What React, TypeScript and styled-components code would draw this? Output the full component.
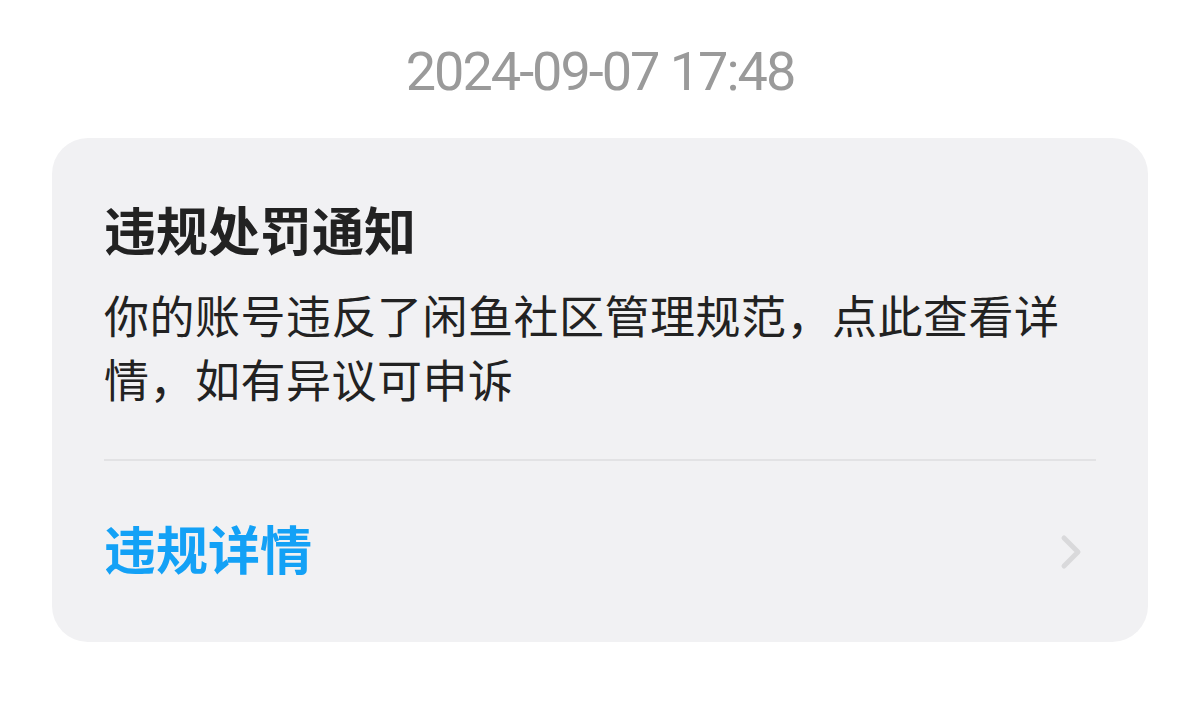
import styled, { createGlobalStyle } from "styled-components";

const GlobalStyle = createGlobalStyle`
  body {
    margin: 0;
    background: #ffffff;
    font-family: "Noto Sans CJK SC", "Noto Sans", sans-serif;
  }
`;

export default function App() {
  return (
    <>
      <GlobalStyle />
      <Page>
        <TimeStamp>2024-09-07 17:48</TimeStamp>
        <Card>
          <Title>违规处罚通知</Title>
          <Body>你的账号违反了闲鱼社区管理规范，点此查看详情，如有异议可申诉</Body>
          <Divider />
          <LinkRow>
            <LinkText>违规详情</LinkText>
            <Chevron viewBox="0 0 24 36" aria-hidden>
              <path
                d="M4 4 L18 18 L4 32"
                fill="none"
                stroke="#d9d9db"
                strokeWidth="5"
                strokeLinecap="round"
                strokeLinejoin="round"
              />
            </Chevron>
          </LinkRow>
        </Card>
      </Page>
    </>
  );
}

const Page = styled.div`
  display: flex;
  flex-direction: column;
  align-items: center;
  padding: 32px 52px 0;
`;

const TimeStamp = styled.div`
  font-family: Roboto, "Noto Sans", sans-serif;
  font-size: 54px;
  line-height: 80px;
  letter-spacing: -2px;
  color: #9a9a9a;
  margin-bottom: 26px;
`;

const Card = styled.div`
  box-sizing: border-box;
  width: 100%;
  height: 504px;
  display: flex;
  flex-direction: column;
  background: #f1f1f3;
  border-radius: 36px;
  padding: 60px 52px 0;
`;

const Title = styled.div`
  font-size: 52px;
  line-height: 62px;
  font-weight: 700;
  color: #222222;
`;

const Body = styled.div`
  margin-top: 23px;
  font-size: 45px;
  line-height: 64px;
  letter-spacing: 0.5px;
  color: #222222;
`;

const Divider = styled.div`
  margin-top: 48px;
  height: 2px;
  background: #e2e2e4;
`;

const LinkRow = styled.div`
  flex: 1;
  display: flex;
  align-items: center;
  justify-content: space-between;
  padding-right: 12px;
`;

const LinkText = styled.span`
  font-size: 52px;
  line-height: 62px;
  font-weight: 700;
  color: #13a1f6;
  margin-top: -8px;
`;

const Chevron = styled.svg`
  width: 24px;
  height: 36px;
`;
